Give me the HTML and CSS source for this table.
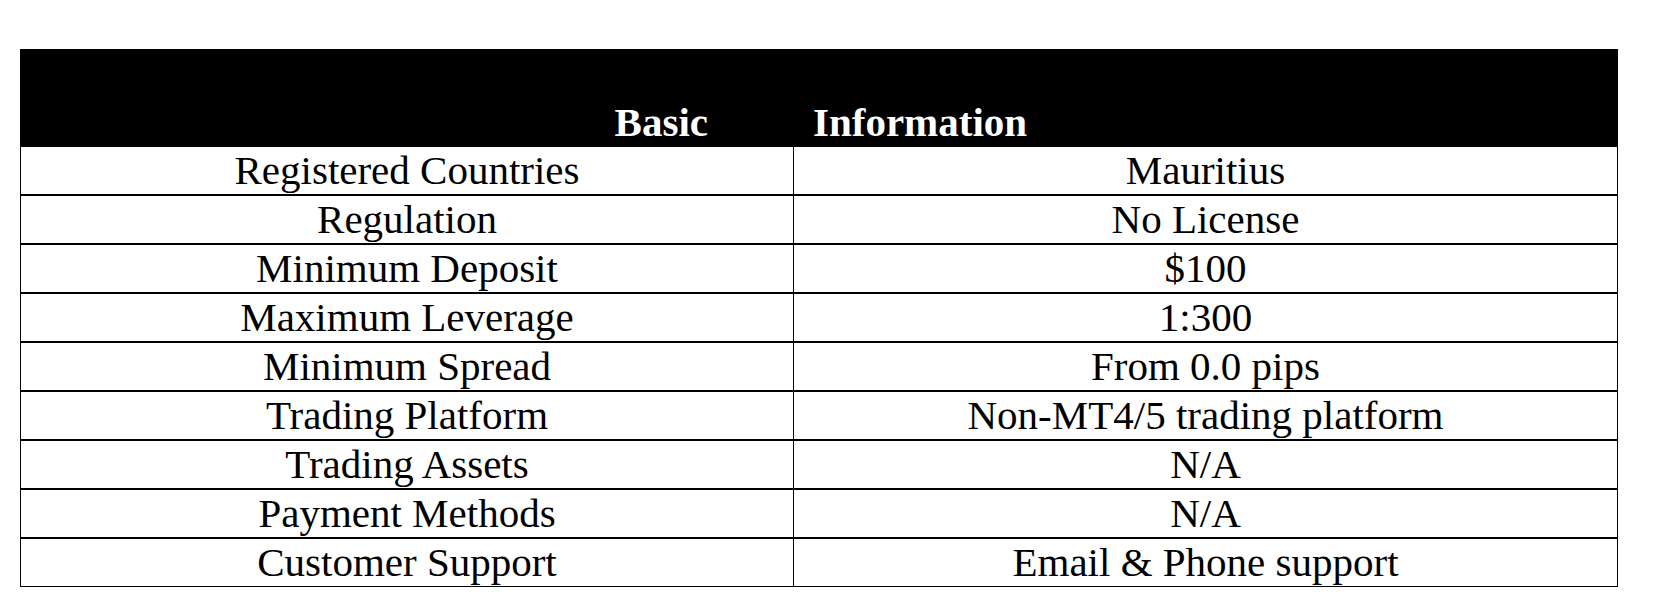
FILE: index.html
```html
<!DOCTYPE html>
<html lang="en">
<head>
<meta charset="utf-8">
<title>Basic Information</title>
<link rel="stylesheet" href="styles.css">
</head>
<body>
<div class="info-table">
  <div class="head">
    <span class="head-left">Basic</span>
    <span class="head-right">Information</span>
  </div>
  <div class="row first"><div class="cell label">Registered Countries</div><div class="cell value">Mauritius</div></div>
  <div class="row"><div class="cell label">Regulation</div><div class="cell value">No License</div></div>
  <div class="row"><div class="cell label">Minimum Deposit</div><div class="cell value">$100</div></div>
  <div class="row"><div class="cell label">Maximum Leverage</div><div class="cell value">1:300</div></div>
  <div class="row"><div class="cell label">Minimum Spread</div><div class="cell value">From 0.0 pips</div></div>
  <div class="row"><div class="cell label">Trading Platform</div><div class="cell value">Non-MT4/5 trading platform</div></div>
  <div class="row"><div class="cell label">Trading Assets</div><div class="cell value">N/A</div></div>
  <div class="row"><div class="cell label">Payment Methods</div><div class="cell value">N/A</div></div>
  <div class="row"><div class="cell label">Customer Support</div><div class="cell value">Email &amp; Phone support</div></div>
</div>
</body>
</html>
```
FILE: styles.css
```css
html, body {
  margin: 0;
  padding: 0;
  background: #fff;
}

body {
  font-family: "Liberation Serif", "Times New Roman", serif;
  font-size: 41px;
  color: #000;
}

.info-table {
  margin: 49px 0 0 20px;
  width: 1598px;
  box-sizing: border-box;
  border-left: 1px solid #000;
  border-right: 1px solid #000;
  border-bottom: 1px solid #000;
}

.head {
  background: #000;
  color: #fff;
  font-weight: bold;
  height: 98px;
  box-sizing: border-box;
  padding-top: 50px;
  line-height: 47px;
  display: grid;
  grid-template-columns: 774px 1fr;
  white-space: nowrap;
}

.head-left {
  text-align: right;
  padding-right: 87px;
}

.head-right {
  text-align: left;
  padding-left: 18px;
}

.row {
  display: grid;
  grid-template-columns: 773px 1fr;
  border-top: 2px solid #000;
  line-height: 47px;
}

.row.first {
  border-top: none;
}

.cell {
  text-align: center;
  white-space: nowrap;
}

.cell.label {
  border-right: 1px solid #000;
}
```
